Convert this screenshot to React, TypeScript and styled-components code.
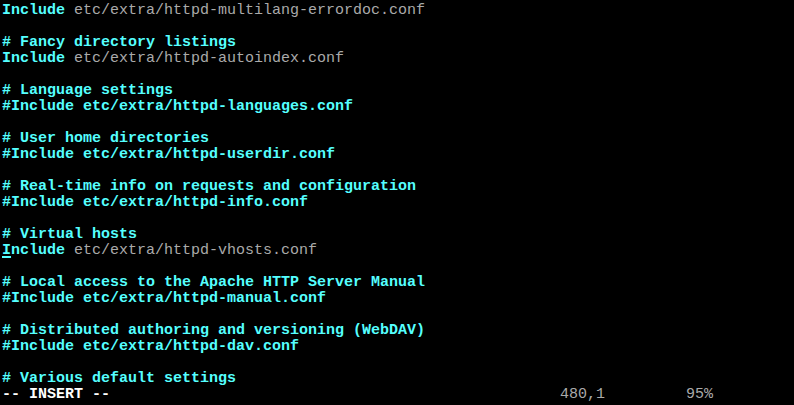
import React from 'react'
import styled, { createGlobalStyle } from 'styled-components'

const GlobalStyle = createGlobalStyle`
  html, body {
    margin: 0;
    padding: 0;
    background: #000000;
  }
`

const CYAN = '#55ffff'
const GRAY = '#aaaaaa'

const Screen = styled.div`
  width: 794px;
  height: 405px;
  overflow: hidden;
  background: #000000;
  padding: 3px 0 0 2px;
  box-sizing: border-box;
  font-family: "Liberation Mono", "DejaVu Sans Mono", monospace;
  font-size: 15px;
  font-weight: bold;
  line-height: 16px;
  display: flex;
  flex-direction: column;
`

const Line = styled.div`
  height: 16px;
  white-space: pre;
  color: ${CYAN};
`

const Path = styled.span`
  color: ${GRAY};
  font-weight: normal;
`

const Cursor = styled.span`
  text-decoration: underline;
  text-decoration-thickness: 2px;
  text-underline-offset: 2px;
`

const StatusLine = styled.div`
  height: 16px;
  white-space: pre;
  display: grid;
  grid-template-columns: 62ch 14ch auto;
`

const Mode = styled.span`
  color: #ffffff;
`

const Ruler = styled.span`
  color: ${GRAY};
  font-weight: normal;
`

type Row =
  | { kind: 'blank' }
  | { kind: 'comment'; text: string }
  | { kind: 'include'; path: string; cursor?: boolean }

const rows: Row[] = [
  { kind: 'include', path: 'etc/extra/httpd-multilang-errordoc.conf' },
  { kind: 'blank' },
  { kind: 'comment', text: '# Fancy directory listings' },
  { kind: 'include', path: 'etc/extra/httpd-autoindex.conf' },
  { kind: 'blank' },
  { kind: 'comment', text: '# Language settings' },
  { kind: 'comment', text: '#Include etc/extra/httpd-languages.conf' },
  { kind: 'blank' },
  { kind: 'comment', text: '# User home directories' },
  { kind: 'comment', text: '#Include etc/extra/httpd-userdir.conf' },
  { kind: 'blank' },
  { kind: 'comment', text: '# Real-time info on requests and configuration' },
  { kind: 'comment', text: '#Include etc/extra/httpd-info.conf' },
  { kind: 'blank' },
  { kind: 'comment', text: '# Virtual hosts' },
  { kind: 'include', path: 'etc/extra/httpd-vhosts.conf', cursor: true },
  { kind: 'blank' },
  { kind: 'comment', text: '# Local access to the Apache HTTP Server Manual' },
  { kind: 'comment', text: '#Include etc/extra/httpd-manual.conf' },
  { kind: 'blank' },
  { kind: 'comment', text: '# Distributed authoring and versioning (WebDAV)' },
  { kind: 'comment', text: '#Include etc/extra/httpd-dav.conf' },
  { kind: 'blank' },
  { kind: 'comment', text: '# Various default settings' },
]

const App: React.FC = () => {
  return (
    <Screen>
      <GlobalStyle />
      {rows.map((row, i) => {
        if (row.kind === 'blank') return <Line key={i}> </Line>
        if (row.kind === 'comment') return <Line key={i}>{row.text}</Line>
        return (
          <Line key={i}>
            {row.cursor ? <><Cursor>I</Cursor>nclude</> : 'Include'} <Path>{row.path}</Path>
          </Line>
        )
      })}
      <StatusLine>
        <Mode>-- INSERT --</Mode>
        <Ruler>480,1</Ruler>
        <Ruler>95%</Ruler>
      </StatusLine>
    </Screen>
  )
}

export default App
